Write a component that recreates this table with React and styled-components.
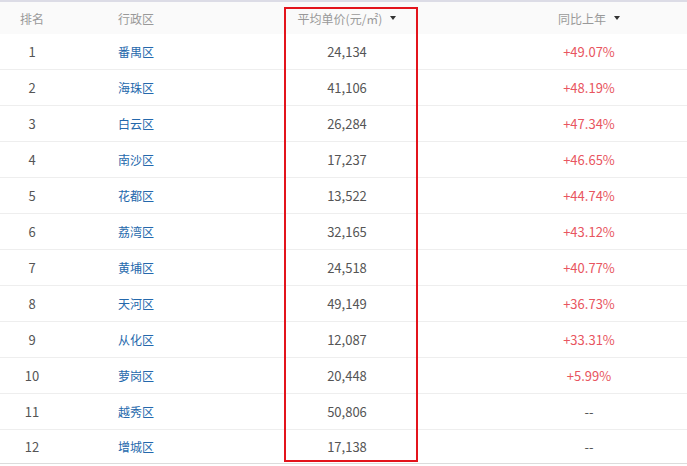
import React from "react";
import styled, { createGlobalStyle } from "styled-components";

const Global = createGlobalStyle`
  html, body { margin: 0; padding: 0; background: #fff; }
  body { font-family: "Noto Sans CJK SC", "Noto Sans", sans-serif; }
`;

const Wrap = styled.div`
  position: relative;
  width: 687px;
  height: 466px;
  overflow: hidden;
  background: #fff;
  border-top: 2px solid #dcdce6;
  box-sizing: border-box;
`;

const cols = "64px 218px 130px 1fr";

const Header = styled.div`
  display: grid;
  grid-template-columns: ${cols};
  height: 32px;
  align-items: center;
  background: #fafafa;
  color: #999;
  font-size: 12px;
`;

const HCell = styled.div`
  display: flex;
  align-items: center;
  justify-content: ${(p) => (p.$left ? "flex-start" : "center")};
  padding-left: ${(p) => p.$pl || 0}px;
  gap: 8px;
`;

const Caret = styled.span`
  width: 0;
  height: 0;
  border-left: 3.5px solid transparent;
  border-right: 3.5px solid transparent;
  border-top: 4px solid #333;
  margin-top: -1px;
`;

const Row = styled.div`
  display: grid;
  grid-template-columns: ${cols};
  height: ${(p) => (p.$last ? 34 : 36)}px;
  box-sizing: border-box;
  align-items: center;
  border-bottom: 1px solid ${(p) => (p.$last ? "#dcdcdc" : "#eeeeee")};
`;

const Rank = styled.div`
  text-align: center;
  font-size: 13px;
  color: #555;
`;

const District = styled.div`
  padding-left: 54px;
  font-size: 12px;
  color: #2468ac;
`;

const Price = styled.div`
  text-align: center;
  font-size: 13px;
  color: #555;
`;

const Change = styled.div`
  text-align: center;
  padding-left: 79px;
  font-size: 13px;
  color: ${(p) => (p.$none ? "#555" : "#e85560")};
`;

const Highlight = styled.div`
  position: absolute;
  left: 284px;
  top: 5px;
  width: 134px;
  height: 455px;
  border: 2px solid #e3141c;
  box-sizing: border-box;
  pointer-events: none;
`;

const data = [
  ["番禺区", "24,134", "+49.07%"],
  ["海珠区", "41,106", "+48.19%"],
  ["白云区", "26,284", "+47.34%"],
  ["南沙区", "17,237", "+46.65%"],
  ["花都区", "13,522", "+44.74%"],
  ["荔湾区", "32,165", "+43.12%"],
  ["黄埔区", "24,518", "+40.77%"],
  ["天河区", "49,149", "+36.73%"],
  ["从化区", "12,087", "+33.31%"],
  ["萝岗区", "20,448", "+5.99%"],
  ["越秀区", "50,806", "--"],
  ["增城区", "17,138", "--"],
];

export default function App() {
  return (
    <>
      <Global />
      <Wrap>
        <Header>
          <HCell>排名</HCell>
          <HCell $left $pl={54}>行政区</HCell>
          <HCell>
            平均单价(元/㎡)
            <Caret />
          </HCell>
          <HCell style={{ paddingLeft: 79 }}>
            同比上年
            <Caret />
          </HCell>
        </Header>
        {data.map(([name, price, change], i) => (
          <Row key={name} $last={i === data.length - 1}>
            <Rank>{i + 1}</Rank>
            <District>{name}</District>
            <Price>{price}</Price>
            <Change $none={change === "--"}>{change}</Change>
          </Row>
        ))}
        <Highlight />
      </Wrap>
    </>
  );
}
